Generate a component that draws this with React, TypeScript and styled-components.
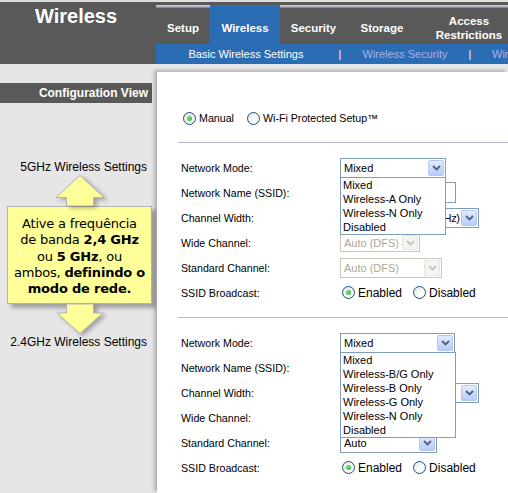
import React from "react";
import styled, { createGlobalStyle } from "styled-components";

const GlobalStyle = createGlobalStyle`
  html, body { margin: 0; padding: 0; background: #fff; }
  body {
    width: 508px; height: 493px; overflow: hidden;
    font-family: "Liberation Sans", Arial, sans-serif;
  }
  * { box-sizing: border-box; }
`;

const Page = styled.div`
  width: 508px;
  height: 493px;
  display: flex;
  flex-direction: column;
  background: #e6e6e6;
  overflow: hidden;
`;

const Header = styled.header`
  display: flex;
  height: 64px;
  flex: none;
  background: #595959;
  border-top: 2px solid #dedede;
`;

const TitleBlock = styled.div`
  width: 156px;
  flex: none;
  padding: 3px 0 0 35px;
  color: #fff;
  font-weight: bold;
  font-size: 20px;
  line-height: 23px;
`;

const Nav = styled.nav`
  flex: 1;
  min-width: 0;
  display: flex;
  flex-direction: column;
`;

const TabRow = styled.div`
  display: flex;
  height: 42px;
  padding-top: 3px;
  overflow: hidden;
`;

const Tab = styled.div<{ $active?: boolean; $w: number }>`
  width: ${(p) => p.$w}px;
  flex: none;
  display: flex;
  align-items: center;
  justify-content: center;
  text-align: center;
  padding-top: 6px;
  color: #fff;
  font-weight: bold;
  font-size: 11.5px;
  line-height: 14px;
  background: ${(p) =>
    p.$active
      ? "#2b6db4"
      : "linear-gradient(#d4d4de 0, #a4a4b4 2px, #74747f 3px, #595959 3px)"};
`;

const SubBar = styled.div`
  height: 20px;
  background: #2b6db4;
  display: flex;
  align-items: center;
  font-size: 11px;
  white-space: nowrap;
  overflow: hidden;
`;

const SubItem = styled.span<{ $w?: number; $active?: boolean; $pl?: number }>`
  flex: none;
  width: ${(p) => (p.$w ? `${p.$w}px` : "auto")};
  padding-left: ${(p) => p.$pl ?? 0}px;
  text-align: ${(p) => (p.$w ? "center" : "left")};
  color: ${(p) => (p.$active ? "#ffffff" : "#a9b1ee")};
`;

const SubSep = styled.span`
  flex: none;
  width: 8px;
  text-align: center;
  color: #fff;
`;

const Body = styled.div`
  flex: 1;
  min-height: 0;
  display: flex;
  padding-top: 8px;
`;

const Sidebar = styled.aside`
  width: 152px;
  flex: none;
  padding-top: 11px;
  display: flex;
  flex-direction: column;
`;

const ConfigBar = styled.div`
  height: 20px;
  background: #595959;
  color: #fff;
  font-weight: bold;
  font-size: 12px;
  line-height: 20px;
  text-align: right;
  padding-right: 4px;
`;

const SideLabel = styled.div<{ $mt: number }>`
  margin-top: ${(p) => p.$mt}px;
  font-size: 12px;
  line-height: 14px;
  text-align: right;
  padding-right: 5px;
  color: #000;
  white-space: nowrap;
`;

const Callout = styled.div`
  margin: 1px 0 0 7px;
  width: 145px;
  display: flex;
  flex-direction: column;
  align-items: center;
`;

const ArrowSvg = styled.svg`
  display: block;
  flex: none;
  filter: drop-shadow(3px 2px 2px rgba(0, 0, 0, 0.3));
`;

const CalloutBox = styled.div`
  width: 145px;
  background: #ffff99;
  border: 1px solid #b4b4b4;
  box-shadow: 4px 4px 4px rgba(0, 0, 0, 0.3);
  padding: 9px 0 6px;
  font-family: "DejaVu Sans", Verdana, sans-serif;
  font-size: 13px;
  line-height: 16.25px;
  text-align: center;
  color: #000;
  white-space: nowrap;
  letter-spacing: -0.2px;
`;

const Main = styled.main`
  flex: 1;
  min-width: 0;
  margin-left: 5px;
  background: #fff;
  box-shadow: -3px -2px 3px rgba(0, 0, 0, 0.22);
  padding-top: 36px;
`;

const ModeRow = styled.div`
  display: flex;
  align-items: center;
  height: 20px;
  padding-left: 26px;
`;

const RadioOption = styled.label<{ $size: number; $mr: number }>`
  display: inline-flex;
  align-items: center;
  gap: 3px;
  margin-right: ${(p) => p.$mr}px;
  font-size: ${(p) => p.$size}px;
  color: #000;
  white-space: nowrap;
`;

const RadioCircle = styled.span<{ $checked?: boolean }>`
  width: 13px;
  height: 13px;
  flex: none;
  border-radius: 50%;
  border: 1px solid #1c5180;
  background: radial-gradient(circle at 65% 65%, #ffffff 20%, #dcdcd6 100%);
  display: flex;
  align-items: center;
  justify-content: center;
  &::after {
    content: "";
    display: ${(p) => (p.$checked ? "block" : "none")};
    width: 5px;
    height: 5px;
    border-radius: 50%;
    background: radial-gradient(circle at 40% 40%, #7ce77c, #21a121);
  }
`;

const Divider = styled.hr<{ $mt: number }>`
  margin: ${(p) => p.$mt}px 0 0 21px;
  border: 0;
  border-top: 1px solid #b8b8d8;
  height: 0;
`;

const Section = styled.section`
  padding: 12px 0;
`;

const Row = styled.div`
  display: flex;
  align-items: center;
  height: 25px;
  padding-left: 24px;
`;

const Label = styled.span`
  width: 159px;
  flex: none;
  font-size: 10.67px;
  color: #000;
  white-space: nowrap;
`;

const SelectBox = styled.div<{ $w: number; $h?: number; $disabled?: boolean }>`
  position: relative;
  width: ${(p) => p.$w}px;
  height: ${(p) => p.$h ?? 20}px;
  border: 1px solid ${(p) => (p.$disabled ? "#c9c7ba" : "#7f9db9")};
  background: #fff;
  display: flex;
  align-items: center;
  font-size: 11px;
  color: ${(p) => (p.$disabled ? "#aca899" : "#000")};
`;

const SelectText = styled.span<{ $tight?: boolean }>`
  flex: 1;
  min-width: 0;
  padding-left: 3px;
  white-space: nowrap;
  overflow: hidden;
  letter-spacing: ${(p) => (p.$tight ? "-0.4px" : "normal")};
`;

const SelectButton = styled.span<{ $disabled?: boolean }>`
  width: 16px;
  height: calc(100% - 2px);
  margin-right: 1px;
  flex: none;
  border: 1px solid ${(p) => (p.$disabled ? "#e6e6df" : "#b5c8f2")};
  border-radius: 2px;
  background: ${(p) =>
    p.$disabled ? "#f4f4f0" : "linear-gradient(#e3ebfd, #b8ccf7)"};
  display: flex;
  align-items: center;
  justify-content: center;
`;

const DropList = styled.ul<{ $extra?: number }>`
  position: absolute;
  left: -1px;
  top: 100%;
  width: calc(100% + ${(p) => 2 + (p.$extra ?? 0)}px);
  margin: 0;
  padding: 0;
  list-style: none;
  background: #fff;
  border: 1px solid #7f9db9;
  z-index: 10;
`;

const DropItem = styled.li`
  height: 14px;
  line-height: 14px;
  font-size: 11px;
  padding-left: 2px;
  color: #000;
  white-space: nowrap;
`;

const TextBox = styled.div<{ $w: number }>`
  width: ${(p) => p.$w}px;
  height: 21px;
  border: 1px solid #7f9db9;
  background: #fff;
`;

const RadioGroup = styled.div`
  display: flex;
  align-items: center;
  padding-left: 2px;
`;

const Chevron: React.FC<{ disabled?: boolean }> = ({ disabled }) => (
  <svg width="9" height="6" viewBox="0 0 9 6">
    <path
      d="M1 1 L4.5 4.5 L8 1"
      fill="none"
      stroke={disabled ? "#c9c7ba" : "#4d6185"}
      strokeWidth="1.9"
    />
  </svg>
);

type SelectProps = {
  w: number;
  h?: number;
  value: string;
  disabled?: boolean;
  tight?: boolean;
  options?: string[];
  listExtra?: number;
};

const Select: React.FC<SelectProps> = ({ w, h, value, disabled, tight, options, listExtra }) => (
  <SelectBox $w={w} $h={h} $disabled={disabled}>
    <SelectText $tight={tight}>{value}</SelectText>
    <SelectButton $disabled={disabled}>
      <Chevron disabled={disabled} />
    </SelectButton>
    {options && (
      <DropList $extra={listExtra}>
        {options.map((o) => (
          <DropItem key={o}>{o}</DropItem>
        ))}
      </DropList>
    )}
  </SelectBox>
);

const Radio: React.FC<{ checked?: boolean; text: string; size: number; mr: number }> = ({
  checked,
  text,
  size,
  mr,
}) => (
  <RadioOption $size={size} $mr={mr}>
    <RadioCircle $checked={checked} />
    {text}
  </RadioOption>
);

const UpArrow = () => (
  <ArrowSvg width="52" height="31" viewBox="0 0 52 31">
    <polygon
      points="26,0.5 50,22.5 39.5,22.5 39.5,31 12.5,31 12.5,22.5 2,22.5"
      fill="#ffff99"
      stroke="#b4b4b4"
      strokeWidth="1"
    />
  </ArrowSvg>
);

const DownArrow = () => (
  <ArrowSvg width="52" height="30" viewBox="0 0 52 30">
    <polygon
      points="12.5,0 39.5,0 39.5,9 49,9 26,29.5 3,9 12.5,9"
      fill="#ffff99"
      stroke="#b4b4b4"
      strokeWidth="1"
    />
  </ArrowSvg>
);

const SSIDBroadcast = () => (
  <Row>
    <Label>SSID Broadcast:</Label>
    <RadioGroup>
      <Radio checked text="Enabled" size={12} mr={11} />
      <Radio text="Disabled" size={12} mr={0} />
    </RadioGroup>
  </Row>
);

export default function App() {
  return (
    <>
      <GlobalStyle />
      <Page>
        <Header>
          <TitleBlock>Wireless</TitleBlock>
          <Nav>
            <TabRow>
              <Tab $w={54}>Setup</Tab>
              <Tab $w={70} $active>
                Wireless
              </Tab>
              <Tab $w={67}>Security</Tab>
              <Tab $w={70}>Storage</Tab>
              <Tab $w={104}>
                Access
                <br />
                Restrictions
              </Tab>
            </TabRow>
            <SubBar>
              <SubItem $w={180} $active>
                Basic Wireless Settings
              </SubItem>
              <SubSep>|</SubSep>
              <SubItem $w={122}>Wireless Security</SubItem>
              <SubSep>|</SubSep>
              <SubItem $pl={18}>Wireless MAC Filter</SubItem>
            </SubBar>
          </Nav>
        </Header>

        <Body>
          <Sidebar>
            <ConfigBar>Configuration View</ConfigBar>
            <SideLabel $mt={57}>5GHz Wireless Settings</SideLabel>
            <Callout>
              <UpArrow />
              <CalloutBox>
                Ative a frequência
                <br />
                de banda <b>2,4 GHz</b>
                <br />
                ou <b>5 GHz</b>, ou
                <br />
                ambos, <b>definindo o</b>
                <br />
                <b>modo de rede.</b>
              </CalloutBox>
              <DownArrow />
            </Callout>
            <SideLabel $mt={1}>2.4GHz Wireless Settings</SideLabel>
          </Sidebar>

          <Main>
            <ModeRow>
              <Radio checked text="Manual" size={10.67} mr={13} />
              <Radio text="Wi-Fi Protected Setup™" size={10.67} mr={0} />
            </ModeRow>
            <Divider $mt={14} />

            <Section>
              <Row>
                <Label>Network Mode:</Label>
                <Select
                  w={106}
                  value="Mixed"
                  options={["Mixed", "Wireless-A Only", "Wireless-N Only", "Disabled"]}
                />
              </Row>
              <Row>
                <Label>Network Name (SSID):</Label>
                <TextBox $w={116} />
              </Row>
              <Row>
                <Label>Channel Width:</Label>
                <Select w={139} value="Auto (20 MHz or 40 MHz)" tight />
              </Row>
              <Row>
                <Label>Wide Channel:</Label>
                <Select w={80} h={19} value="Auto (DFS)" disabled />
              </Row>
              <Row>
                <Label>Standard Channel:</Label>
                <Select w={102} value="Auto (DFS)" disabled />
              </Row>
              <SSIDBroadcast />
            </Section>
            <Divider $mt={0} />

            <Section>
              <Row>
                <Label>Network Mode:</Label>
                <Select
                  w={115}
                  value="Mixed"
                  listExtra={1}
                  options={[
                    "Mixed",
                    "Wireless-B/G Only",
                    "Wireless-B Only",
                    "Wireless-G Only",
                    "Wireless-N Only",
                    "Disabled",
                  ]}
                />
              </Row>
              <Row>
                <Label>Network Name (SSID):</Label>
                <TextBox $w={112} />
              </Row>
              <Row>
                <Label>Channel Width:</Label>
                <Select w={139} value="20MHz Only" />
              </Row>
              <Row>
                <Label>Wide Channel:</Label>
                <Select w={80} value="Auto" disabled />
              </Row>
              <Row>
                <Label>Standard Channel:</Label>
                <Select w={97} value="Auto" />
              </Row>
              <SSIDBroadcast />
            </Section>
          </Main>
        </Body>
      </Page>
    </>
  );
}
